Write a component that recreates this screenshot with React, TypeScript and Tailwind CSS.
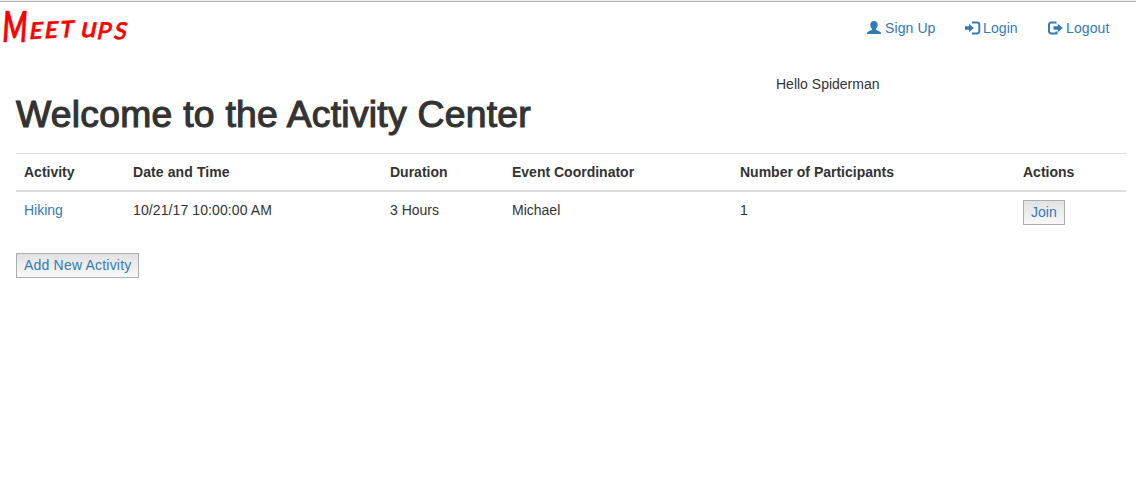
import type { ReactNode } from "react";

function UserIcon() {
  return (
    <svg width="14" height="14" viewBox="0 0 14 14" fill="currentColor" aria-hidden="true">
      <path d="M7 0C4.800 0 3.300 1.400 3.300 3.700c0 1.700.7 3.200 1.700 4.100v1C4.200 9.700 1.300 10 .4 11.200c-.3.4-.4 1-.4 1.800h14c0-.8-.1-1.400-.4-1.800C12.700 10 9.800 9.700 9 8.800v-1c1-.9 1.700-2.400 1.700-4.100C10.700 1.400 9.200 0 7 0z" />
    </svg>
  );
}

function LoginIcon() {
  return (
    <svg width="16" height="14" viewBox="0 0 16 14" fill="currentColor" aria-hidden="true">
      <path d="M0 5.300h4V2.800L8.800 7 4 11.200V8.700H0z" />
      <path d="M7 1.500h5a2.300 2.300 0 0 1 2.300 2.300v6.400a2.300 2.300 0 0 1-2.300 2.300H7" fill="none" stroke="currentColor" strokeWidth="2" />
    </svg>
  );
}

function LogoutIcon() {
  return (
    <svg width="16" height="14" viewBox="0 0 16 14" fill="currentColor" aria-hidden="true">
      <path d="M5.500 5.300h4.300V2.800L14.800 7l-5 4.200V8.700H5.500z" />
      <path d="M8.500 1.500H3.300A2.300 2.300 0 0 0 1 3.800v6.400a2.300 2.300 0 0 0 2.300 2.300h5.200v-2" fill="none" stroke="currentColor" strokeWidth="2" />
    </svg>
  );
}

function NavLink({ icon, width, children }: { icon: ReactNode; width: string; children: string }) {
  return (
    <a href="#" className={`flex h-5 items-center whitespace-nowrap tracking-[0.1px] text-[#337ab7] ${width}`}>
      <span className="flex w-[18px] shrink-0">{icon}</span>
      <span>{children}</span>
    </a>
  );
}

function Button({ children, className }: { children: string; className: string }) {
  return (
    <button className={`block h-[25px] whitespace-nowrap border border-[#adadad] bg-linear-to-b from-[#e2e2e2] to-[#f8f8f8] pl-[7px] text-left leading-[22px] text-[#337ab7] ${className}`}>
      {children}
    </button>
  );
}

function Logo() {
  return (
    <div className="flex h-[50px] w-[132px] items-start whitespace-nowrap pl-[4px] font-['Lato',sans-serif] font-bold text-[#ff0000] [-webkit-text-stroke:0.3px_#ff0000]">
      <span className="mr-[-15px] mt-[3px] block origin-top-left -skew-x-6 scale-x-[0.62] text-[43px] leading-[42px]">M</span>
      <span className="mt-[13px] block -rotate-3 -skew-x-12 text-[23px] uppercase leading-[28px] tracking-[2px]">eet</span>
      <span className="ml-[6px] mt-[9px] block -skew-x-12 text-[28px] font-normal leading-[30px] [-webkit-text-stroke:0.9px_#ff0000]">u</span>
      <span className="mt-[14px] block -skew-x-12 text-[23px] font-normal uppercase leading-[28px] tracking-[3px] [-webkit-text-stroke:0.9px_#ff0000]">ps</span>
    </div>
  );
}

export default function App() {
  return (
    <div className="h-[487px] overflow-hidden border-t border-[#eeeeee] bg-white font-['Liberation_Sans',Arial,sans-serif] text-sm leading-5 text-[#333333]">
      <header className="flex h-[74px] items-start justify-between border-t border-[#b4b4b4]">
        <Logo />
        <nav className="flex pt-4">
          <NavLink width="w-[98px]" icon={<UserIcon />}>Sign Up</NavLink>
          <NavLink width="w-[83px]" icon={<LoginIcon />}>Login</NavLink>
          <NavLink width="w-[88px]" icon={<LogoutIcon />}>Logout</NavLink>
        </nav>
      </header>
      <main className="w-[1126px] pl-4">
        <p className="-mt-px h-5 pl-[760px]">Hello Spiderman</p>
        <h1 className="h-[59px] origin-left scale-x-[1.035] whitespace-nowrap pt-px text-[36px] leading-[40px] tracking-[0.27px] [-webkit-text-stroke:1.1px_#333333]">Welcome to the Activity Center</h1>
        <table className="w-full table-fixed border-collapse text-left">
          <colgroup>
            <col className="w-[109px]" />
            <col className="w-[257px]" />
            <col className="w-[122px]" />
            <col className="w-[228px]" />
            <col className="w-[283px]" />
            <col />
          </colgroup>
          <thead>
            <tr className="h-[37px] border-t border-b-2 border-[#dddddd]">
              <th className="pl-2">Activity</th>
              <th className="pl-2 tracking-[0.1px]">Date and Time</th>
              <th className="pl-2">Duration</th>
              <th className="pl-2">Event Coordinator</th>
              <th className="pl-2">Number of Participants</th>
              <th className="pl-2">Actions</th>
            </tr>
          </thead>
          <tbody>
            <tr className="h-[42px] align-top">
              <td className="pl-2 pt-2"><a href="#" className="text-[#337ab7]">Hiking</a></td>
              <td className="pl-2 pt-2 tracking-[0.1px]">10/21/17 10:00:00 AM</td>
              <td className="pl-2 pt-2">3 Hours</td>
              <td className="pl-2 pt-2">Michael</td>
              <td className="pl-2 pt-2">1</td>
              <td className="pl-2 pt-2"><Button className="w-[42px]">Join</Button></td>
            </tr>
          </tbody>
        </table>
        <div className="pt-5">
          <Button className="w-[123px] tracking-[0.2px]">Add New Activity</Button>
        </div>
      </main>
    </div>
  );
}
